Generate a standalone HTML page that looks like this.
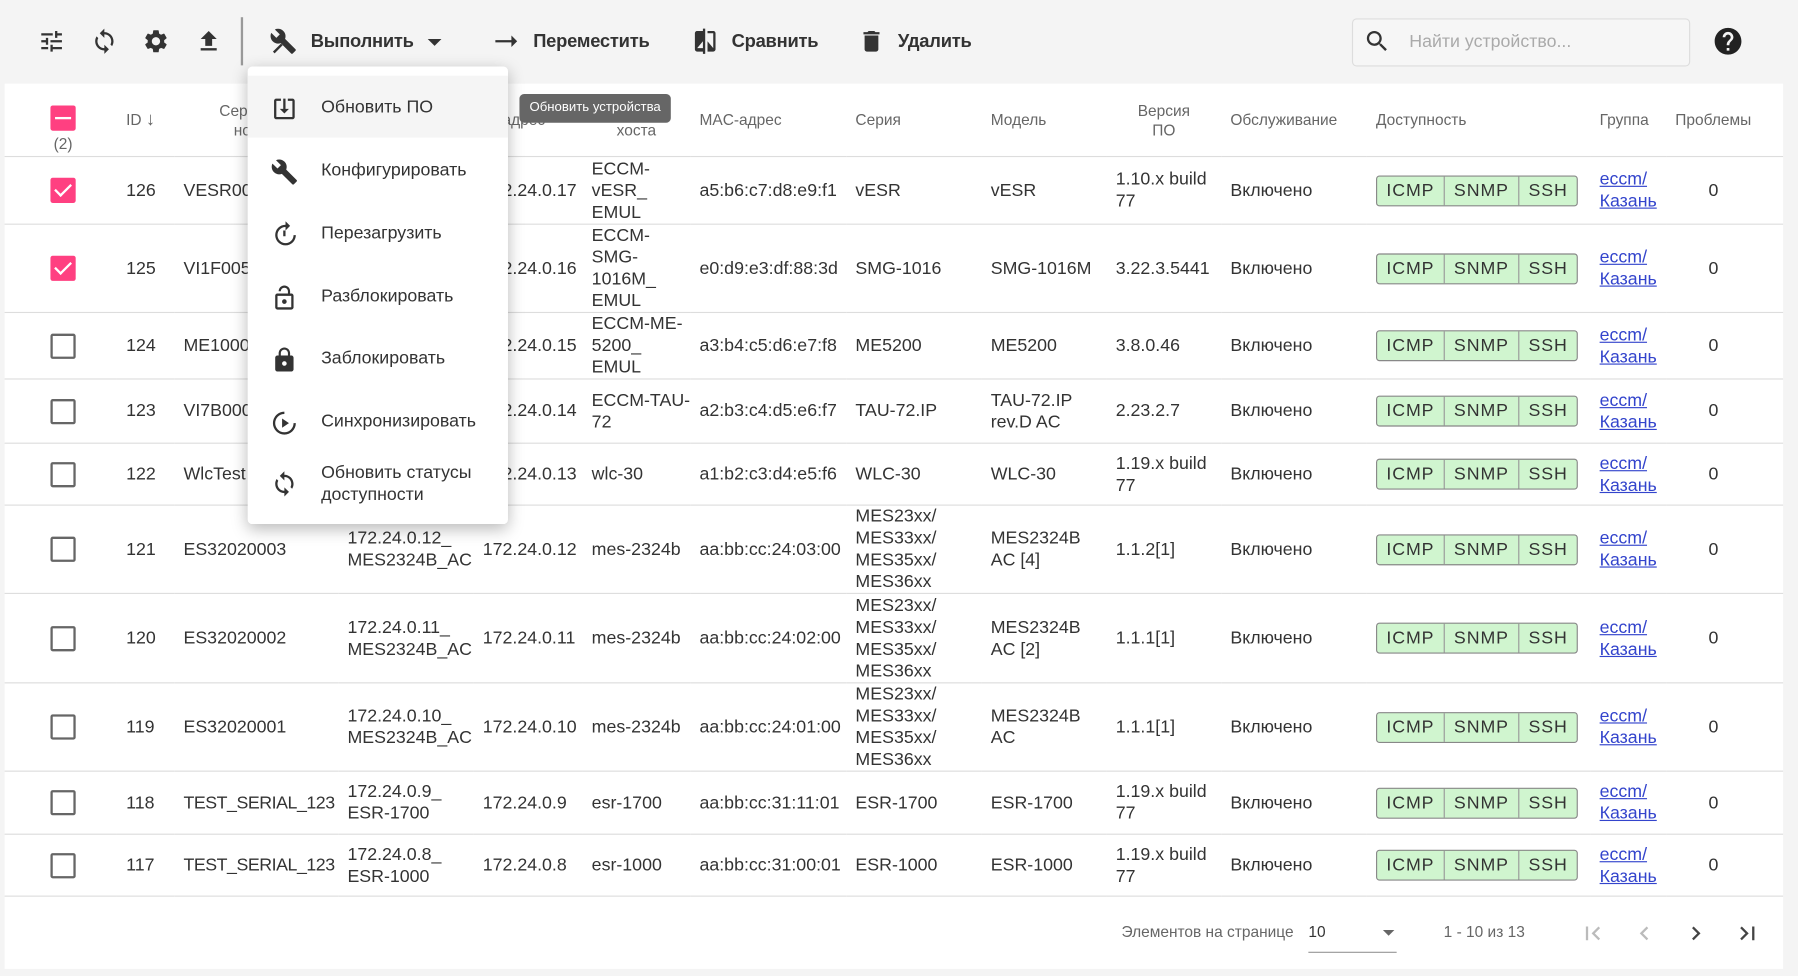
<!DOCTYPE html>
<html><head><meta charset="utf-8">
<style>
html,body{margin:0;padding:0;width:1798px;height:976px;overflow:hidden;background:#f4f4f4;}
#w{position:absolute;left:0;top:0;width:1568px;height:851px;transform:scale(1.14668);transform-origin:0 0;font-family:"Liberation Sans",sans-serif;color:#333;}
.tb{position:absolute;top:0;left:0;width:1568px;height:73px;}
.ic{position:absolute;width:24px;height:24px;fill:#333;}
.tl{position:absolute;top:28px;font-size:16px;font-weight:bold;color:#333;letter-spacing:-0.2px;}
.panel{position:absolute;left:4px;top:73px;width:1551px;height:772px;background:#fff;}
table{position:absolute;left:0;top:0;border-collapse:collapse;table-layout:fixed;width:1551px;}
td,th{padding:0 0 0 8px;font-size:15.5px;line-height:19px;vertical-align:middle;text-align:left;overflow:visible;white-space:nowrap;}
th{font-size:13.5px;font-weight:normal;color:#666;height:63px;line-height:17px;}
tr{border-bottom:1px solid #ddd;}
.c{text-align:center;padding:0;}
.cb{display:inline-block;width:18px;height:18px;border:2px solid #666;border-radius:2px;vertical-align:middle;}
.cbs{display:inline-block;width:22px;height:22px;background:#ff4081;border-radius:2px;vertical-align:middle;position:relative;}
.cbs:after{content:"";position:absolute;left:7px;top:2px;width:6px;height:12px;border:solid #fff;border-width:0 2px 2px 0;transform:rotate(45deg);}
.cbi{display:inline-block;width:22px;height:22px;background:#ff4081;border-radius:2px;vertical-align:middle;position:relative;}
.cbi:after{content:"";position:absolute;left:4px;top:10px;width:14px;height:2px;background:#fff;}
.av{display:inline-flex;border:1px solid #888;border-radius:3px;background:#d0f5cf;height:25px;}
.av span{display:block;line-height:25px;padding:0 8px;font-size:15.5px;letter-spacing:0.8px;border-left:1px solid #999;}
.av span:first-child{border-left:none;}
a{color:#3344cc;text-decoration:underline;}
.menu{position:absolute;left:216px;top:58px;width:227px;height:399px;background:#fff;border-radius:4px;box-shadow:0 4px 14px rgba(0,0,0,.28);}
.mi{position:absolute;left:0;width:227px;font-size:15.5px;color:#333;}
.mi svg{position:absolute;left:20px;width:24px;height:24px;fill:#333;}
.mi span{position:absolute;left:64px;}
.tip{position:absolute;left:453px;top:82px;width:132px;height:25px;background:#666;color:#fff;border-radius:4px;font-size:11.5px;line-height:25px;text-align:center;}
.ft{position:absolute;font-size:13.5px;color:#666;}
</style></head><body><div id="w">
<div class="tb">
<svg class="ic" style="left:33px;top:24px" viewBox="0 0 24 24"><path d="M3 17v2h6v-2H3zM3 5v2h10V5H3zm10 16v-2h8v-2h-8v-2h-2v6h2zM7 9v2H3v2h4v2h2V9H7zm14 4v-2H11v2h10zm-6-4h2V7h4V5h-4V3h-2v6z"/></svg>
<svg class="ic" style="left:79px;top:24px" viewBox="0 0 24 24"><path d="M12 4V1L8 5l4 4V6c3.31 0 6 2.69 6 6 0 1.01-.25 1.97-.7 2.8l1.46 1.46C19.54 15.03 20 13.57 20 12c0-4.42-3.58-8-8-8zm0 14c-3.31 0-6-2.69-6-6 0-1.01.25-1.970.7-2.8L5.24 7.74C4.46 8.97 4 10.43 4 12c0 4.42 3.58 8 8 8v3l4-4-4-4v3z"/></svg>
<svg class="ic" style="left:124px;top:24px" viewBox="0 0 24 24"><path d="M19.14 12.94c.04-.3.06-.61.06-.94 0-.32-.02-.64-.07-.94l2.03-1.58a.49.49 0 0 0 .12-.61l-1.92-3.32a.488.488 0 0 0-.59-.22l-2.39.96c-.5-.38-1.03-.7-1.620-.94l-.36-2.54a.484.484 0 0 0-.48-.41h-3.84c-.24 0-.43.17-.47.41l-.36 2.54c-.59.24-1.13.57-1.62.94l-2.39-.96c-.22-.08-.47 0-.59.22L2.74 8.87c-.12.21-.08.47.12.61l2.03 1.58c-.05.3-.09.63-.09.94s.02.64.07.94l-2.03 1.58a.49.49 0 0 0-.12.61l1.92 3.32c.12.22.37.29.59.22l2.39-.96c.5.38 1.03.7 1.62.94l.36 2.54c.05.24.24.41.48.41h3.84c.24 0 .44-.17.47-.41l.36-2.54c.59-.24 1.13-.56 1.62-.94l2.39.96c.22.08.47 0 .59-.22l1.92-3.32c.12-.22.07-.47-.12-.61l-2.01-1.58zM12 15.6c-1.98 0-3.6-1.62-3.6-3.6s1.62-3.6 3.6-3.6 3.6 1.62 3.6 3.6-1.62 3.6-3.6 3.6z"/></svg>
<svg class="ic" style="left:170px;top:24px" viewBox="0 0 24 24"><path d="M9 16h6v-6h4l-7-7-7 7h4zm-4 2h14v2H5z"/></svg>
<div style="position:absolute;left:210px;top:15px;width:2px;height:42px;background:#999"></div>
<svg class="ic" style="left:235px;top:24px" viewBox="0 0 24 24"><path d="M22.7 19l-9.1-9.1c.9-2.3.4-5-1.5-6.9-2-2-5-2.4-7.4-1.3L9 6 6 9 1.6 4.7C.4 7.1.9 10.1 2.9 12.1c1.9 1.9 4.6 2.4 6.9 1.5l9.1 9.1c.4.4 1 .4 1.4 0l2.3-2.3c.5-.4.5-1.1.1-1.4z"/><path d="M3 21l7-7 1.5 1.5-7 7z"/></svg>
<div class="tl" style="left:271px">Выполнить</div>
<div style="position:absolute;left:373px;top:34px;border:6px solid transparent;border-top:6px solid #333;border-bottom:0"></div>
<svg class="ic" style="left:430px;top:24px" viewBox="0 0 24 24"><path d="M2 11h16v2H2z"/><path d="M16 7l5 5-5 5z"/></svg>
<div class="tl" style="left:465px">Переместить</div>
<svg class="ic" style="left:603px;top:24px" viewBox="0 0 24 24"><path d="M10 3H5c-1.1 0-2 .9-2 2v14c0 1.1.9 2 2 2h5v2h2V1h-2v2zm0 15H5l5-6v6zm9-15h-5v2h5v13l-5-6v9h5c1.1 0 2-.9 2-2V5c0-1.1-.9-2-2-2z"/></svg>
<div class="tl" style="left:638px">Сравнить</div>
<svg class="ic" style="left:748px;top:24px" viewBox="0 0 24 24"><path d="M6 19c0 1.1.9 2 2 2h8c1.1 0 2-.9 2-2V7H6v12zM19 4h-3.5l-1-1h-5l-1 1H5v2h14V4z"/></svg>
<div class="tl" style="left:783px">Удалить</div>
<div style="position:absolute;left:1179px;top:16px;width:293px;height:40px;border:1px solid #ddd;border-radius:4px;background:#f6f6f6"></div>
<svg class="ic" style="left:1189px;top:24px" viewBox="0 0 24 24"><path d="M15.5 14h-.79l-.28-.27C15.41 12.59 16 11.11 16 9.5 16 5.91 13.09 3 9.5 3S3 5.910 3 9.5 5.91 16 9.5 16c1.61 0 3.09-.59 4.23-1.57l.27.28v.79l5 4.99L20.49 19l-4.99-5zm-6 0C7.01 14 5 11.99 5 9.5S7.01 5 9.5 5 14 7.01 14 9.5 11.99 14 9.5 14z"/></svg>
<div style="position:absolute;left:1229px;top:28px;font-size:15.5px;color:#aaa">Найти устройство...</div>
<svg class="ic" style="left:1493px;top:22px;width:28px;height:28px;fill:#222" viewBox="0 0 24 24"><path d="M12 2C6.48 2 2 6.48 2 12s4.48 10 10 10 10-4.48 10-10S17.52 2 12 2zm1 17h-2v-2h2v2zm2.07-7.75l-.9.92C13.45 12.9 13 13.5 13 15h-2v-.5c0-1.1.45-2.1 1.17-2.83l1.24-1.26c.37-.36.59-.86.59-1.41 0-1.1-.9-2-2-2s-2 .9-2 2H8c0-2.21 1.79-4 4-4s4 1.79 4 4c0 .88-.36 1.68-.93 2.25z"/></svg>
</div>

<div class="panel">
<table>
<colgroup><col style="width:98px"><col style="width:50px"><col style="width:143px"><col style="width:118px"><col style="width:95px"><col style="width:94px"><col style="width:136px"><col style="width:118px"><col style="width:109px"><col style="width:100px"><col style="width:127px"><col style="width:195px"><col style="width:66px"><col style="width:102px"></colgroup>
<tr><th class="c" style="padding-left:4px"><div style="position:relative;top:8px"><span class="cbi"></span><br><span style="display:block;margin-top:3px">(2)</span></div></th>
<th>ID <span style="font-size:16px">↓</span></th><th class="c">Серийный<br>номер</th><th>Имя</th><th>IP-адрес</th><th class="c">Имя<br>хоста</th><th>MAC-адрес</th><th>Серия</th><th>Модель</th><th class="c">Версия<br>ПО</th><th>Обслуживание</th><th>Доступность</th><th>Группа</th><th>Проблемы</th></tr>
<tr style="height:59px"><td class="c" style="padding-left:4px"><span class="cbs"></span></td><td>126</td><td>VESR0001</td><td>172.24.0.17_</td><td>172.24.0.17</td><td>ECCM-<br>vESR_<br>EMUL</td><td>a5:b6:c7:d8:e9:f1</td><td>vESR</td><td>vESR</td><td>1.10.x build<br>77</td><td>Включено</td><td><span class="av"><span>ICMP</span><span>SNMP</span><span>SSH</span></span></td><td><a>eccm/<br>Казань</a></td><td style="padding-left:37px">0</td></tr>
<tr style="height:77px"><td class="c" style="padding-left:4px"><span class="cbs"></span></td><td>125</td><td>VI1F005</td><td>172.24.0.16_</td><td>172.24.0.16</td><td>ECCM-<br>SMG-<br>1016M_<br>EMUL</td><td>e0:d9:e3:df:88:3d</td><td>SMG-1016</td><td>SMG-1016M</td><td>3.22.3.5441</td><td>Включено</td><td><span class="av"><span>ICMP</span><span>SNMP</span><span>SSH</span></span></td><td><a>eccm/<br>Казань</a></td><td style="padding-left:37px">0</td></tr>
<tr style="height:58px"><td class="c" style="padding-left:4px"><span class="cb"></span></td><td>124</td><td>ME1000</td><td>172.24.0.15_</td><td>172.24.0.15</td><td>ECCM-ME-<br>5200_<br>EMUL</td><td>a3:b4:c5:d6:e7:f8</td><td>ME5200</td><td>ME5200</td><td>3.8.0.46</td><td>Включено</td><td><span class="av"><span>ICMP</span><span>SNMP</span><span>SSH</span></span></td><td><a>eccm/<br>Казань</a></td><td style="padding-left:37px">0</td></tr>
<tr style="height:56px"><td class="c" style="padding-left:4px"><span class="cb"></span></td><td>123</td><td>VI7B000</td><td>172.24.0.14_</td><td>172.24.0.14</td><td>ECCM-TAU-<br>72</td><td>a2:b3:c4:d5:e6:f7</td><td>TAU-72.IP</td><td>TAU-72.IP<br>rev.D AC</td><td>2.23.2.7</td><td>Включено</td><td><span class="av"><span>ICMP</span><span>SNMP</span><span>SSH</span></span></td><td><a>eccm/<br>Казань</a></td><td style="padding-left:37px">0</td></tr>
<tr style="height:54px"><td class="c" style="padding-left:4px"><span class="cb"></span></td><td>122</td><td>WlcTest</td><td>172.24.0.13_</td><td>172.24.0.13</td><td>wlc-30</td><td>a1:b2:c3:d4:e5:f6</td><td>WLC-30</td><td>WLC-30</td><td>1.19.x build<br>77</td><td>Включено</td><td><span class="av"><span>ICMP</span><span>SNMP</span><span>SSH</span></span></td><td><a>eccm/<br>Казань</a></td><td style="padding-left:37px">0</td></tr>
<tr style="height:77px"><td class="c" style="padding-left:4px"><span class="cb"></span></td><td>121</td><td>ES32020003</td><td>172.24.0.12_<br>MES2324B_AC</td><td>172.24.0.12</td><td>mes-2324b</td><td>aa:bb:cc:24:03:00</td><td>MES23xx/<br>MES33xx/<br>MES35xx/<br>MES36xx</td><td>MES2324B<br>AC [4]</td><td>1.1.2[1]</td><td>Включено</td><td><span class="av"><span>ICMP</span><span>SNMP</span><span>SSH</span></span></td><td><a>eccm/<br>Казань</a></td><td style="padding-left:37px">0</td></tr>
<tr style="height:78px"><td class="c" style="padding-left:4px"><span class="cb"></span></td><td>120</td><td>ES32020002</td><td>172.24.0.11_<br>MES2324B_AC</td><td>172.24.0.11</td><td>mes-2324b</td><td>aa:bb:cc:24:02:00</td><td>MES23xx/<br>MES33xx/<br>MES35xx/<br>MES36xx</td><td>MES2324B<br>AC [2]</td><td>1.1.1[1]</td><td>Включено</td><td><span class="av"><span>ICMP</span><span>SNMP</span><span>SSH</span></span></td><td><a>eccm/<br>Казань</a></td><td style="padding-left:37px">0</td></tr>
<tr style="height:77px"><td class="c" style="padding-left:4px"><span class="cb"></span></td><td>119</td><td>ES32020001</td><td>172.24.0.10_<br>MES2324B_AC</td><td>172.24.0.10</td><td>mes-2324b</td><td>aa:bb:cc:24:01:00</td><td>MES23xx/<br>MES33xx/<br>MES35xx/<br>MES36xx</td><td>MES2324B<br>AC</td><td>1.1.1[1]</td><td>Включено</td><td><span class="av"><span>ICMP</span><span>SNMP</span><span>SSH</span></span></td><td><a>eccm/<br>Казань</a></td><td style="padding-left:37px">0</td></tr>
<tr style="height:55px"><td class="c" style="padding-left:4px"><span class="cb"></span></td><td>118</td><td style="letter-spacing:-0.4px">TEST_SERIAL_123</td><td>172.24.0.9_<br>ESR-1700</td><td>172.24.0.9</td><td>esr-1700</td><td>aa:bb:cc:31:11:01</td><td>ESR-1700</td><td>ESR-1700</td><td>1.19.x build<br>77</td><td>Включено</td><td><span class="av"><span>ICMP</span><span>SNMP</span><span>SSH</span></span></td><td><a>eccm/<br>Казань</a></td><td style="padding-left:37px">0</td></tr>
<tr style="height:54px"><td class="c" style="padding-left:4px"><span class="cb"></span></td><td>117</td><td style="letter-spacing:-0.4px">TEST_SERIAL_123</td><td>172.24.0.8_<br>ESR-1000</td><td>172.24.0.8</td><td>esr-1000</td><td>aa:bb:cc:31:00:01</td><td>ESR-1000</td><td>ESR-1000</td><td>1.19.x build<br>77</td><td>Включено</td><td><span class="av"><span>ICMP</span><span>SNMP</span><span>SSH</span></span></td><td><a>eccm/<br>Казань</a></td><td style="padding-left:37px">0</td></tr>
</table>
</div>

<div class="ft" style="left:978px;top:805px">Элементов на странице</div>
<div class="ft" style="left:1141px;top:805px;color:#333">10</div>
<div style="position:absolute;left:1141px;top:830px;width:77px;height:1px;background:#999"></div>
<div style="position:absolute;left:1206px;top:811px;border:5px solid transparent;border-top:5px solid #666;border-bottom:0"></div>
<div class="ft" style="left:1259px;top:805px">1 - 10 из 13</div>
<svg style="position:absolute;left:1377px;top:802px" width="24" height="24" viewBox="0 0 24 24" fill="#bbb"><path d="M18.41 16.59L13.82 12l4.59-4.59L17 6l-6 6 6 6zM6 6h2v12H6z"/></svg>
<svg style="position:absolute;left:1422px;top:802px" width="24" height="24" viewBox="0 0 24 24" fill="#bbb"><path d="M15.41 7.41L14 6l-6 6 6 6 1.41-1.41L10.83 12z"/></svg>
<svg style="position:absolute;left:1467px;top:802px" width="24" height="24" viewBox="0 0 24 24" fill="#444"><path d="M10 6L8.59 7.41 13.17 12l-4.58 4.59L10 18l6-6z"/></svg>
<svg style="position:absolute;left:1512px;top:802px" width="24" height="24" viewBox="0 0 24 24" fill="#444"><path d="M5.59 7.41L10.18 12l-4.590 4.59L7 18l6-6-6-6zM16 6h2v12h-2z"/></svg>

<div class="menu">
<div style="position:absolute;left:0;top:8px;width:227px;height:54px;background:#f5f5f5"></div>
<div class="mi" style="top:27px"><svg viewBox="0 0 24 24" style="top:-2px"><path d="M19 3h-4v2h4v14H5V5h4V3H5c-1.1 0-2 .9-2 2v14c0 1.1.9 2 2 2h14c1.1 0 2-.9 2-2V5c0-1.1-.9-2-2-2zm-6 0h-2v9H8l4 4 4-4h-3z"/></svg><span>Обновить ПО</span></div>
<div class="mi" style="top:82px"><svg viewBox="0 0 24 24" style="top:-2px"><path d="M22.7 19l-9.1-9.1c.9-2.3.4-5-1.5-6.9-2-2-5-2.4-7.4-1.3L9 6 6 9 1.6 4.7C.4 7.1.9 10.1 2.9 12.1c1.9 1.9 4.6 2.4 6.9 1.5l9.1 9.1c.4.4 1 .4 1.4 0l2.3-2.3c.5-.4.5-1.1.1-1.4z"/></svg><span>Конфигурировать</span></div>
<div class="mi" style="top:137px"><svg viewBox="0 0 24 24" style="top:-2px"><path d="M13 3V0l4 4-4 4V5a7 7 0 1 0 7 7h2a9 9 0 1 1-9-9z"/><path d="M11 8h2v5h-2z"/></svg><span>Перезагрузить</span></div>
<div class="mi" style="top:192px"><svg viewBox="0 0 24 24" style="top:-2px"><path d="M12 17c1.1 0 2-.9 2-2s-.9-2-2-2-2 .9-2 2 .9 2 2 2zm6-9h-1V6c0-2.76-2.24-5-5-5S7 3.24 7 6h1.9c0-1.71 1.39-3.1 3.1-3.1 1.71 0 3.1 1.39 3.1 3.1v2H6c-1.1 0-2 .9-2 2v10c0 1.1.9 2 2 2h12c1.1 0 2-.9 2-2V10c0-1.1-.9-2-2-2zm0 12H6V10h12v10z"/></svg><span>Разблокировать</span></div>
<div class="mi" style="top:246px"><svg viewBox="0 0 24 24" style="top:-2px"><path d="M18 8h-1V6c0-2.76-2.24-5-5-5S7 3.24 7 6v2H6c-1.1 0-2 .9-2 2v10c0 1.1.9 2 2 2h12c1.1 0 2-.9 2-2V10c0-1.1-.9-2-2-2zm-6 9c-1.1 0-2-.9-2-2s.9-2 2-2 2 .9 2 2-.9 2-2 2zm3.1-9H8.9V6c0-1.71 1.39-3.1 3.1-3.1 1.71 0 3.1 1.39 3.1 3.1v2z"/></svg><span>Заблокировать</span></div>
<div class="mi" style="top:301px"><svg viewBox="0 0 24 24" style="top:-2px"><path d="M12 2a10 10 0 1 0 10 10h-2a8 8 0 1 1-8-8V2z"/><path d="M10 8l6 4-6 4z"/></svg><span>Синхронизировать</span></div>
<div class="mi" style="top:345px;line-height:19px"><svg viewBox="0 0 24 24" style="top:7px"><path d="M12 4V1L8 5l4 4V6c3.31 0 6 2.69 6 6 0 1.01-.25 1.97-.7 2.8l1.46 1.46C19.54 15.03 20 13.570 20 12c0-4.42-3.58-8-8-8zm0 14c-3.31 0-6-2.69-6-6 0-1.01.25-1.97.7-2.8L5.24 7.74C4.46 8.97 4 10.43 4 12c0 4.42 3.58 8 8 8v3l4-4-4-4v3z"/></svg><span>Обновить статусы<br>доступности</span></div>
</div>
<div class="tip">Обновить устройства</div>
</div></body></html>
